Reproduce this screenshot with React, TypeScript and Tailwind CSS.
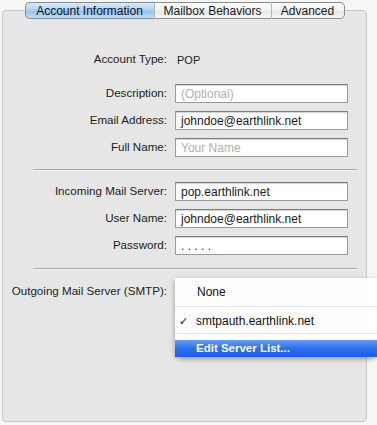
const FONT = "font-['Liberation_Sans',Arial,sans-serif]";

function Field({ value, placeholder }: { value?: string; placeholder?: string }) {
  return (
    <div className="w-[173px] h-[19px] bg-white border border-[#9a9a9a] border-t-[#7c7c7c] shadow-[inset_0_1px_1px_rgba(0,0,0,0.18)] flex items-center px-[5px] text-[12px] leading-none">
      {value ? (
        <span className="text-[#1a1a1a] pt-[2px]">{value}</span>
      ) : (
        <span className="text-[#b0b0b0] pt-[2px]">{placeholder}</span>
      )}
    </div>
  );
}

function Row({ label, children, className = '' }: { label: string; children: React.ReactNode; className?: string }) {
  return (
    <div className={`flex items-center gap-[8px] ${className}`}>
      <div className="w-[164px] shrink-0 whitespace-nowrap text-right text-[11.6px] text-[#1c1c1c]">{label}</div>
      {children}
    </div>
  );
}

function Separator({ className = '' }: { className?: string }) {
  return <div className={`ml-[30px] w-[324px] h-px bg-[#a9a9a9] shadow-[0_1px_0_#f5f5f5] ${className}`} />;
}

const tabs = [
  { name: 'Account Information', width: 'w-[129px]', active: true },
  { name: 'Mailbox Behaviors', width: 'w-[117px]', active: false },
  { name: 'Advanced', width: 'w-[74px]', active: false },
];

export default function App() {
  return (
    <div className={`relative w-[377px] h-[425px] bg-[#f6f6f6] pt-[10px] pl-[2px] pr-[10px] pb-[3px] ${FONT}`}>
      <div className="h-full border border-[#c6c6c6] rounded-[4px] bg-[#e6e6e6]">
        <div className="flex justify-center -mt-[9px]">
          {tabs.map((tab, i) => (
            <div
              key={tab.name}
              className={`${tab.width} shrink-0 whitespace-nowrap h-[17px] flex items-center justify-center text-[12px] border-y border-[#8c8c8c] ${
                i === 0 ? 'border-l rounded-l-[5px]' : 'border-l border-l-[#b8b8b8]'
              } ${i === tabs.length - 1 ? 'border-r rounded-r-[5px]' : ''} ${
                tab.active
                  ? 'bg-[linear-gradient(#d9ebfb,#a9d0f3_50%,#8ec1ee_51%,#bfe0fb)] text-[#111]'
                  : 'bg-[linear-gradient(#ffffff,#f2f2f2_50%,#e6e6e6_51%,#f6f6f6)] text-[#1a1a1a]'
              }`}
            >
              {tab.name}
            </div>
          ))}
        </div>

        <Row label="Account Type:" className="mt-[29px]">
          <span className="ml-[2px] text-[11px] text-[#222] pt-[4px]">POP</span>
        </Row>

        <Row label="Description:" className="mt-[15px]">
          <Field placeholder="(Optional)" />
        </Row>
        <Row label="Email Address:" className="mt-[8px]">
          <Field value="johndoe@earthlink.net" />
        </Row>
        <Row label="Full Name:" className="mt-[8px]">
          <Field placeholder="Your Name" />
        </Row>

        <Separator className="mt-[12px]" />

        <Row label="Incoming Mail Server:" className="mt-[12px]">
          <Field value="pop.earthlink.net" />
        </Row>
        <Row label="User Name:" className="mt-[8px]">
          <Field value="johndoe@earthlink.net" />
        </Row>
        <Row label="Password:" className="mt-[8px]">
          <Field value=". . . . ." />
        </Row>

        <Separator className="mt-[13px]" />

        <Row label="Outgoing Mail Server (SMTP):" className="mt-[13px]">
          <span />
        </Row>
      </div>

      <div className="absolute left-[175px] top-[278px] w-[202px] h-[79px] bg-white/95 rounded-b-[5px] shadow-[0_2px_5px_rgba(0,0,0,0.35)] flex flex-col text-[12px] text-[#111] pt-[4px]">
        <div className="h-[21px] flex items-center pl-[22px]">None</div>
        <div className="my-[4px] h-px bg-[#e4e4e4]" />
        <div className="h-[21px] flex items-center relative pl-[21px]">
          <span className="absolute left-[4px] text-[11px]">✓</span>
          smtpauth.earthlink.net
        </div>
        <div className="mt-[2px] h-px bg-[#e4e4e4]" />
        <div className="mt-[6px] h-[18px] flex items-center pl-[21px] text-[11.5px] text-white font-bold bg-[linear-gradient(#6a9cf5,#2e6ff0_50%,#1a5fe8)]">
          Edit Server List...
        </div>
      </div>
    </div>
  );
}
